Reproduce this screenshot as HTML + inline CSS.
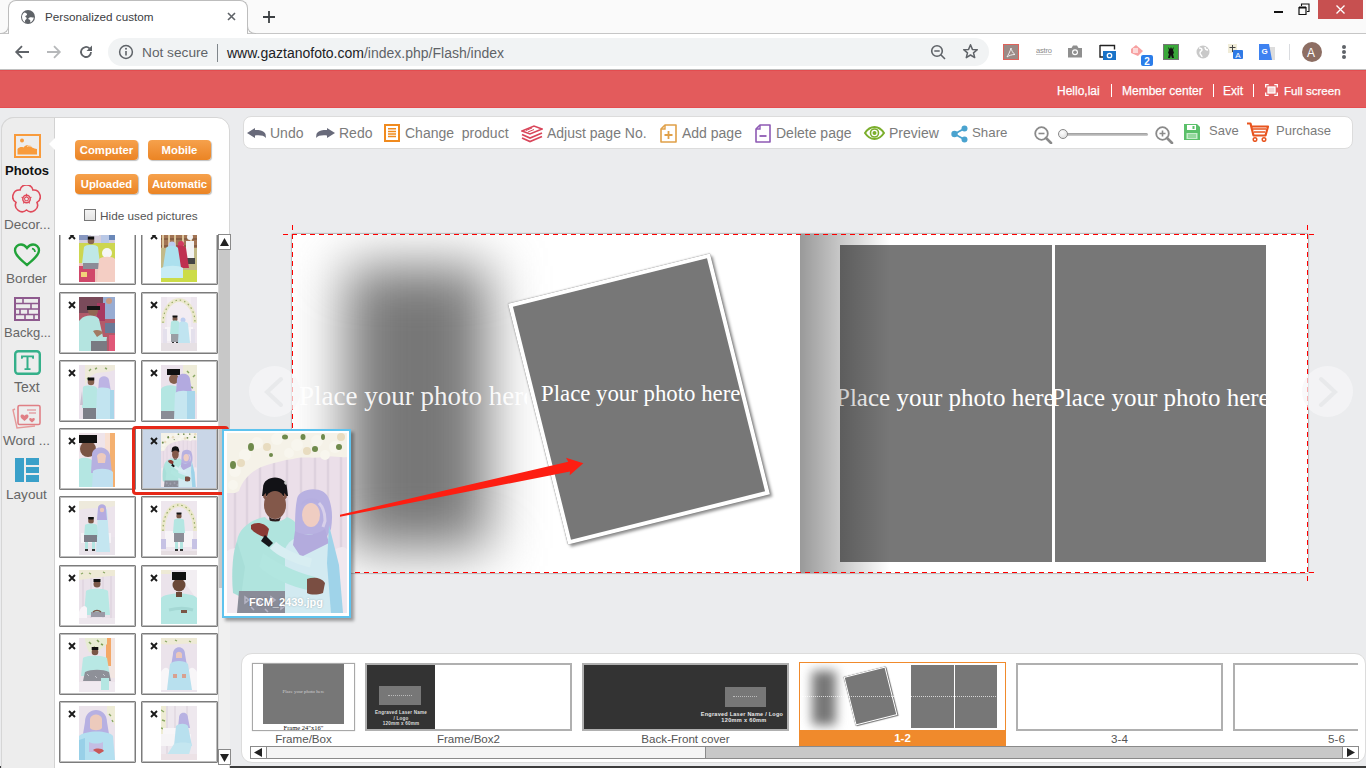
<!DOCTYPE html>
<html><head><meta charset="utf-8">
<style>
*{margin:0;padding:0;box-sizing:border-box}
html,body{width:1366px;height:768px;overflow:hidden;background:#ebecee;font-family:"Liberation Sans",sans-serif;position:relative}
.a{position:absolute}
.t{position:absolute;white-space:nowrap;line-height:1}
.btn{position:absolute;width:63px;height:20px;border-radius:4px;background:linear-gradient(#f6a14c,#eb8424);color:#fff;font-weight:bold;font-size:11.3px;line-height:20px;text-align:center;box-shadow:1px 1px 1px rgba(0,0,0,.25);white-space:nowrap}
.cell{position:absolute;width:77px;height:62px;border:1px solid #7c7c7c;box-shadow:inset 0 0 0 1px #bdbdbd;border-radius:1px}
.cell .x{position:absolute;left:8px;top:8px}
.cell .ph{position:absolute;left:19.5px;top:4px}
.tb{position:absolute;top:126px;font-size:14px;color:#7b7b7b;white-space:nowrap;line-height:1}
.lb{position:absolute;top:733px;font-size:11.6px;color:#555;text-align:center;white-space:nowrap;line-height:1}
</style></head><body>
<svg width="0" height="0" style="position:absolute">
<defs>
<symbol id="p_sit" viewBox="0 0 36 54"><rect width="36" height="54" fill="#ddd6d6"/><path d="M0 0h36v16H0z" fill="#d4cedc"/><path d="M0 0h9v12H0z" fill="#8797c0"/><path d="M12 0h8v8h-8z" fill="#ececf4"/><path d="M22 0h8v15H22z" fill="#b9c8e6"/><path d="M30 0h6v12h-6z" fill="#6a88b8"/><rect y="15" width="36" height="20" fill="#cdd650"/><path d="M0 35h36v19H0z" fill="#eec4bd"/><path d="M0 38h16v16H0z" fill="#d0486a"/><path d="M2 44h6v5H2z" fill="#f2d27a"/><circle cx="12" cy="13" r="3.3" fill="#8a6652"/><path d="M8.8 11.5h6.4v-3H8.8z" fill="#111"/><path d="M5 19c2-3 12-3 14 0l2 17H3z" fill="#bfe8e6"/><path d="M4 35h17v6H4z" fill="#8c8c98"/><circle cx="28" cy="25" r="5" fill="#f6f6f6"/><path d="M20 31c3-3 14-3 16 0v23H18z" fill="#f4cec4"/></symbol>
<symbol id="p_shelf" viewBox="0 0 36 54"><rect width="36" height="54" fill="#a27454"/><path d="M0 4h36M0 11h36M0 18h36" stroke="#6a4a34" stroke-width="1.1"/><path d="M2 0v20M8 0v20M14 0v20M22 0v20M30 0v20" stroke="#dcc49a" stroke-width="2"/><rect y="20" width="36" height="34" fill="#c2ba88"/><rect y="42" width="36" height="12" fill="#ccdc48"/><circle cx="29" cy="9" r="3" fill="#f4f4f4"/><path d="M25 13h8v20h-8z" fill="#f2f2f2"/><path d="M25 30h9v6h-9z" fill="#444"/><circle cx="20" cy="16" r="3" fill="#d03a60"/><path d="M15 19c2-2 8-2 10 1l3 20H15z" fill="#bf3050"/><circle cx="11" cy="17" r="3.5" fill="#bccbf2"/><path d="M5 20c2-3 10-3 12 0l4 26H1z" fill="#ace0ee"/><path d="M0 40c6-3 18-3 22 0v10H0z" fill="#c8ecf4"/></symbol>
<symbol id="p_pray" viewBox="0 0 36 54"><rect width="36" height="54" fill="#b25a6a"/><path d="M0 0h36v16H0z" fill="#7a4a5a"/><path d="M24 0h12v22H24z" fill="#98acd2"/><circle cx="30" cy="4" r="3" fill="#c89a80"/><path d="M18 6h8v18h-8z" fill="#a83860"/><path d="M26 26h10v10H26z" fill="#6a7a98"/><path d="M30 38h6v16h-6z" fill="#e05878"/><circle cx="14" cy="14" r="5" fill="#926652"/><path d="M8 9h13v4H8z" fill="#151515"/><path d="M2 22c3-4 14-5 18 0l4 18h4l-2 14H0V24z" fill="#b4e4e0"/><path d="M14 34c3-2 9-1 10 2l-6 4z" fill="#a27a62"/><path d="M12 44h16v10H12z" fill="#7a7a82"/></symbol>
<symbol id="p_arch" viewBox="0 0 36 54"><rect width="36" height="54" fill="#ede6ee"/><path d="M6 0h24v54H6z" fill="#f2ecf2"/><path d="M2 26C2 10 12 3 18 3s16 7 16 23" fill="none" stroke="#ebe8cc" stroke-width="4"/><path d="M2 26C2 10 12 3 18 3s16 7 16 23" fill="none" stroke="#98ac68" stroke-width="1.2" stroke-dasharray="1.5 3"/><path d="M4 30h28v14H4z" fill="#f7f4f7"/><circle cx="14" cy="22" r="2.5" fill="#7a5a4a"/><path d="M11.5 20.5h5v-2h-5z" fill="#111"/><path d="M10 25c1-2 7-2 8 0l1 12h-10z" fill="#b4e6e2"/><path d="M10 37h8v8h-8z" fill="#9a9ea4"/><path d="M11 45h2v2h-2zM15 45h2v2h-2z" fill="#333"/><circle cx="22" cy="23" r="2.5" fill="#bccdf0"/><path d="M18 26c1-2 8-2 9 1l2 19H17z" fill="#c0e4f0"/><path d="M2 32h4v14H2zM30 32h4v14h-4z" fill="#e4e0ec"/><rect y="46" width="36" height="8" fill="#e6e0e4"/></symbol>
<symbol id="p_stand" viewBox="0 0 36 54"><rect width="36" height="54" fill="#ebe2ec"/><path d="M6 0h30v5c-6 2-12 2-18 3C12 10 8 14 6 22z" fill="#eeeada"/><path d="M10 6l2-2M16 4l2-1M26 3l2 1M8 14l2-1" stroke="#8aa864" stroke-width="1.4"/><circle cx="12" cy="17" r="3.3" fill="#85604e"/><path d="M8.7 15.5h6.6v-3H8.7z" fill="#111"/><path d="M4 22c2-2 12-2 14 1l1 20H3z" fill="#b6e6e2"/><path d="M4 43h13v11H4z" fill="#7c7e88"/><path d="M3 26l-2 14h3z" fill="#c8c0d0"/><circle cx="25" cy="16" r="3.3" fill="#ecc8ba"/><path d="M20 15c1-5 9-5 10 0l2 12H19z" fill="#bdb4e4"/><path d="M18 24c2-2 12-2 14 1l2 29H17z" fill="#c2e4f0"/><path d="M31 25h4v29h-4z" fill="#a8d6ea"/></symbol>
<symbol id="p_close" viewBox="0 0 36 54"><rect width="36" height="54" fill="#ebe2eb"/><path d="M22 0h14v30c-4-6-6-14-14-20z" fill="#eeecd8"/><path d="M26 6l2 2M32 12l2-2M30 22l2 1" stroke="#8aa864" stroke-width="1.5"/><circle cx="13" cy="14" r="5" fill="#85604e"/><path d="M6 10h13V4H6z" fill="#111"/><path d="M0 24c3-5 15-5 20 0l2 30H0z" fill="#b4e6e2"/><path d="M0 46h16v8H0z" fill="#8a8c96"/><circle cx="22" cy="17" r="4" fill="#ecc4b6"/><path d="M16 14c1-7 12-7 13 0l2 14H15z" fill="#b3aae0"/><path d="M14 28c4-3 14-3 18 1l2 25H13z" fill="#c6e6f0"/><path d="M26 26h8v28h-8z" fill="#a8d6ea"/></symbol>
<symbol id="p_face" viewBox="0 0 36 54"><rect width="36" height="54" fill="#efe4ea"/><path d="M30 0h6v54h-6z" fill="#f4b070"/><path d="M26 0h5v30h-5z" fill="#f8e0d2"/><circle cx="9" cy="16" r="8" fill="#7a5444"/><path d="M0 2h18v8H0z" fill="#121212"/><path d="M0 26c4-2 10-2 14 2l4 26H0z" fill="#b4e6e2"/><circle cx="22" cy="25" r="5.5" fill="#eccaba"/><path d="M13 22c0-10 16-10 18 0l2 18H12z" fill="#b6b0e0"/><path d="M18 23c1-4 8-4 9 0l-1 7h-7z" fill="#eecbbd"/><path d="M14 38c4-3 16-3 20 1v15H13z" fill="#c0e0f0"/></symbol>
<symbol id="p_coupleB" viewBox="0 0 36 54"><rect width="36" height="54" fill="#ece4ec"/><path d="M0 0h36v5C24 8 12 6 0 9z" fill="#eeeadc"/><path d="M0 36h36v18H0z" fill="#e9e3ea"/><path d="M2 32h30v10H2z" fill="#f6f2f6"/><path d="M19 9c2-3 8-3 9 0l3 42H17z" fill="#c4e6f0"/><path d="M19 7c0-5 8-5 8 0l1 12h-10z" fill="#b4abe0"/><circle cx="23" cy="9" r="2.2" fill="#ecc8ba"/><circle cx="12" cy="20" r="2.8" fill="#7a5646"/><path d="M9.2 18.5h5.6v-2.5H9.2z" fill="#111"/><path d="M6 24c2-2 10-2 12 0l1 12H5z" fill="#b4e6e2"/><path d="M5 34h13v7H5z" fill="#7c7e88"/><path d="M6 41h3v7H6zM13 41h3v7h-3z" fill="#b4e6e2"/><path d="M6 48h3v2H6zM13 48h3v2h-3z" fill="#333"/></symbol>
<symbol id="p_manarch" viewBox="0 0 36 54"><rect width="36" height="54" fill="#eee7ee"/><path d="M2 30C2 10 12 4 18 4s16 6 16 26" fill="none" stroke="#ebe8cc" stroke-width="4"/><path d="M2 30C2 10 12 4 18 4s16 6 16 26" fill="none" stroke="#98ac68" stroke-width="1.2" stroke-dasharray="1.5 3"/><path d="M4 30h28v16H4z" fill="#f7f4f7"/><circle cx="18" cy="15" r="2.6" fill="#7a5848"/><path d="M15.5 13.5h5v-2h-5z" fill="#111"/><path d="M13 19c1-2 9-2 10 0l1 13H12z" fill="#b4e6e2"/><path d="M13 32h10v9H13z" fill="#8c8e98"/><path d="M14 41h3v7h-3zM19 41h3v7h-3z" fill="#b4e6e2"/><path d="M14 48h3v2h-3zM19 48h3v2h-3z" fill="#333"/><path d="M0 38h5v10H0zM31 38h5v10h-5z" fill="#c6c2e4"/><rect y="50" width="36" height="4" fill="#e6dee2"/></symbol>
<symbol id="p_mansit" viewBox="0 0 36 54"><rect width="36" height="54" fill="#eae2ea"/><path d="M4 0v54M12 0v54M24 0v54M32 0v54" stroke="#e2d8e2" stroke-width="2"/><path d="M0 0h36v6c-10 0-20 2-36 4z" fill="#eeead6"/><path d="M2 4l2-1M10 3l2 1M24 2l2 1" stroke="#8aa864" stroke-width="1.3"/><circle cx="18" cy="14" r="3.5" fill="#7a5646"/><path d="M14.5 12h7V9h-7z" fill="#111"/><path d="M7 21c3-3 19-3 22 0l2 24H5z" fill="#b8e8e4"/><path d="M0 42c2-6 6-8 8-4v16H0z" fill="#f8f4f8"/><path d="M12 42h14v5H12z" fill="#9a9aa6"/><path d="M14 42c2-2 6-2 8 0" stroke="#7a5646" stroke-width="1.5" fill="none"/><path d="M0 48h36v6H0z" fill="#eee8ee"/></symbol>
<symbol id="p_portrait" viewBox="0 0 36 54"><rect width="36" height="54" fill="#ebe3eb"/><path d="M24 0h12v30c-4-6-8-12-12-16z" fill="#f2eef2"/><path d="M0 0h10v4H0z" fill="#eeead6"/><circle cx="18" cy="15" r="6.5" fill="#6a4838"/><path d="M11 10h14V2H11z" fill="#101010"/><path d="M0 28c4-6 32-6 36 0v26H0z" fill="#b4e6e2"/><path d="M15 22h6v5h-6z" fill="#6a4838"/><path d="M8 40c8-2 18-2 24 0" stroke="#a4d8d4" stroke-width="3" fill="none"/><path d="M20 40h6v3h-6z" fill="#7a5646"/></symbol>
<symbol id="p_mansit2" viewBox="0 0 36 54"><rect width="36" height="54" fill="#ece3ea"/><path d="M28 0h8v40h-8z" fill="#f2e6e2"/><path d="M27 0h5v28h-5z" fill="#f4a868"/><path d="M6 0h22v6c-6 6-12 10-18 8C8 10 6 4 6 0z" fill="#e8ecd4"/><path d="M10 4l2 2M18 2l2 2M14 10l2-1M22 6l2 1" stroke="#7e9e58" stroke-width="1.6"/><circle cx="16" cy="14" r="3.3" fill="#7a5646"/><path d="M12.7 12h6.6V9h-6.6z" fill="#111"/><path d="M4 20c3-3 20-3 24 0l3 18H2z" fill="#b8e8e4"/><path d="M6 34c6-3 18-3 24 0l2 9H4z" fill="#8e9098"/><path d="M8 36l2 2M16 38l2 2M24 36l2 2" stroke="#c4c4cc" stroke-width="1"/><path d="M0 44h36v10H0z" fill="#f0eaf0"/><path d="M22 40h8v12h-8z" fill="#b4e6e2"/></symbol>
<symbol id="p_womansit" viewBox="0 0 36 54"><rect width="36" height="54" fill="#ebe3eb"/><path d="M0 0h36v6c-12-2-24 2-36 0z" fill="#eeead6"/><path d="M4 3l2 1M14 2l2 1M28 3l2 1" stroke="#8aa864" stroke-width="1.3"/><path d="M0 32h36v22H0z" fill="#ece6ee"/><path d="M0 34c2-4 6-6 8-2v20H0zM36 34c-2-4-6-6-8-2v20h8z" fill="#f8f6f8"/><circle cx="18" cy="17" r="3.5" fill="#ecc8ba"/><path d="M12 16c0-9 12-9 12 0l2 12H10z" fill="#b4b0e2"/><path d="M15 16c1-3 5-3 6 0v4h-6z" fill="#ecc8ba"/><path d="M9 26c3-4 15-4 18 0l4 26H6z" fill="#b8e0ee"/><path d="M12 36h4v4h-4zM21 36h4v4h-4z" fill="#d8a090"/></symbol>
<symbol id="p_womanclose" viewBox="0 0 36 54"><rect width="36" height="54" fill="#ebe3eb"/><path d="M28 0h8v20c-3-6-5-10-8-12z" fill="#eeecd6"/><path d="M30 8l2 2M33 14l1 2" stroke="#8aa864" stroke-width="1.4"/><path d="M6 16c0-16 22-16 22 0l3 18H3z" fill="#b6b0e2"/><path d="M11 13c1-6 11-6 12 0v9c-2 3-10 3-12 0z" fill="#eccabc"/><path d="M0 30c6-6 30-6 34 0l2 24H0z" fill="#b4e0f0"/><path d="M10 36c4 2 10 2 14 0v10H10z" fill="#c4bee4"/><path d="M0 34l6-2v22H0z" fill="#98d0e8"/><path d="M14 44c3-2 9-2 11 1l-5 3z" fill="#c85858"/></symbol>
<symbol id="p_womansofa" viewBox="0 0 36 54"><rect width="36" height="54" fill="#eee8ee"/><path d="M6 0v54M14 0v54M26 0v54" stroke="#e4dce4" stroke-width="2"/><path d="M0 0h5v30H0z" fill="#eeecd4"/><path d="M0 4l3 2M1 14l3 1M0 22l3 1" stroke="#8aa864" stroke-width="1.4"/><path d="M2 22h24v6H2z" fill="#f8f6f8"/><path d="M0 28h30v12H0z" fill="#f6f4f6"/><circle cx="22" cy="12" r="3" fill="#eac6b8"/><path d="M18 12c0-7 9-7 9 0l2 10H17z" fill="#b8b2e2"/><path d="M15 20c3-3 10-3 12 0l4 20H13z" fill="#b8e0ee"/><path d="M13 38c4-2 14-2 18 0l-4 14H4z" fill="#c4e6f0"/><path d="M0 48h36v6H0z" fill="#ece2e6"/></symbol>
<symbol id="p_big" viewBox="0 0 120 180"><rect width="120" height="180" fill="#ebdfe9"/><path d="M8 0v180M20 0v180M33 0v180M47 0v180M60 0v180M74 0v180M88 0v180M101 0v180M114 0v180" stroke="#dccfdc" stroke-width="2.5" opacity=".8"/><path d="M0 0h120v24c-8 1-16-2-24 0-10 2-20-1-30 2-10 1-18 4-26 6-14 4-24 14-28 26L8 60H0z" fill="#f5f2e8"/><g fill="#f8f6ee"><circle cx="30" cy="10" r="6"/><circle cx="50" cy="6" r="6"/><circle cx="70" cy="12" r="6"/><circle cx="90" cy="8" r="6"/><circle cx="108" cy="14" r="6"/><circle cx="18" cy="22" r="6"/><circle cx="8" cy="38" r="6"/><circle cx="6" cy="52" r="5"/><circle cx="62" cy="20" r="5"/><circle cx="98" cy="22" r="5"/></g><g fill="#e8dcc0"><circle cx="40" cy="14" r="4"/><circle cx="80" cy="18" r="4"/><circle cx="14" cy="30" r="4"/><circle cx="114" cy="4" r="4"/></g><g fill="#6f8a4c"><ellipse cx="24" cy="14" rx="3" ry="4"/><ellipse cx="58" cy="4" rx="3" ry="2.5"/><ellipse cx="76" cy="4" rx="2.5" ry="3"/><ellipse cx="88" cy="16" rx="3" ry="3"/><ellipse cx="112" cy="14" rx="3" ry="3"/><ellipse cx="6" cy="32" rx="3" ry="4"/><ellipse cx="96" cy="4" rx="2" ry="3"/><ellipse cx="44" cy="22" rx="2" ry="2"/></g><path d="M0 118c6-4 12-4 14 2v60H0z" fill="#f1e9f0"/><path d="M104 120c6-6 12-8 16-4v64h-16z" fill="#f0e8ef"/><path d="M36 55c0-14 24-14 24 0l1 8H35z" fill="#121216"/><path d="M57 50l1.5-3 1.5 3-1.5 2z" fill="#ccc"/><ellipse cx="48" cy="72" rx="11" ry="14" fill="#83584a"/><path d="M36 64c1-3 3-4 3-4v8zM60 64c-1-3-3-4-3-4v8z" fill="#83584a"/><path d="M42 84c4 3 9 3 12 0l-2 5c-3 1-6 1-9 0z" fill="#2a1c1c"/><path d="M10 108c2-14 16-22 28-24 4 6 16 6 22 0 6 2 12 8 16 16l4 56-20 6-22 4H14z" fill="#b0e4de"/><path d="M10 108c-4 10-6 30-4 52l8 4 4-30z" fill="#a8ded8"/><path d="M62 158h-50l-2 22h54z" fill="#8a8c98"/><path d="M18 164l4 3-4 3zM30 166l4 3-4 3zM44 164l4 3-4 3zM54 170l4 3-4 3zM24 174l3 3M38 176l3 3" stroke="#b4b4c4" stroke-width="1.6" fill="none"/><path d="M70 66c2-12 28-14 32 0 3 8 4 18 2 30l-8 14-14 8-14-18c0-12 0-24 2-34z" fill="#b8b1e1"/><ellipse cx="84" cy="82" rx="9" ry="12" fill="#efcdc2"/><path d="M74 72c2-8 18-10 20 0-4-3-14-4-20 0z" fill="#b6afe0"/><path d="M92 70c4 4 6 10 6 18l-2 6" stroke="#d8d0ea" stroke-width="3" fill="none"/><path d="M58 116c6-16 30-18 44-12l6 76H58z" fill="#d2eaf1"/><path d="M68 98c8 5 20 5 30-2l4 14-28 14-8-12z" fill="#b3abdd"/><path d="M102 92l10 40 4 48h-12l-4-50z" fill="#9fd3e9"/><path d="M36 120c14 10 30 18 52 24l-2 14c-24-4-42-14-54-24z" fill="#b2e6e0"/><path d="M46 112c6 6 20 14 38 18" stroke="#d8eef2" stroke-width="9" fill="none"/><path d="M80 146c6-2 14-2 18 4l-2 10c-6 2-12 2-16 0z" fill="#7a4e42"/><path d="M24 92c6-4 14-2 18 4l-2 8c-6 0-12-4-16-8z" fill="#8a3a34"/><path d="M38 102l8 8-4 4-8-6z" fill="#16161a"/></symbol>
</defs></svg>


<!-- ===== Chrome tab strip ===== -->
<div class="a" style="left:0;top:0;width:1366px;height:34px;background:#fafafa;border-bottom:1px solid #c6c6c6"></div>
<div class="a" style="left:8px;top:0;width:240px;height:35px;background:#fff;border:1px solid #bdbdbd;border-bottom:none;border-radius:8px 8px 0 0"></div>
<!-- curvy feet -->
<div class="a" style="left:0;top:24px;width:9px;height:10px;border-right:1px solid #bdbdbd;border-bottom:1px solid #bdbdbd;border-radius:0 0 8px 0;background:#fafafa"></div>
<div class="a" style="left:247px;top:24px;width:9px;height:10px;border-left:1px solid #bdbdbd;border-bottom:1px solid #bdbdbd;border-radius:0 0 0 8px;background:#fafafa"></div>
<div class="a" style="left:9px;top:33px;width:238px;height:2px;background:#fff"></div>
<!-- globe -->
<svg class="a" style="left:21px;top:10px" width="14" height="14" viewBox="0 0 14 14"><circle cx="7" cy="7" r="7" fill="#5f6368"/><path d="M3.5 2.6c1.2 .2 2.6 .9 2.6 2 0 1-1.4 .9-1.8 1.7-.3 .7 1.3 1 1.4 1.9.1.9-1 1.2-1.6 2.3-.4.7-.2 1.6.4 2.2C2.4 11.9 1 9.6 1 7c0-1.8.9-3.4 2.5-4.4zM9.3 7.3c.9-.3 2.3 0 3.5.3-.2 2.2-1.6 4.1-3.6 5-.2-.8.4-1.5 0-2.3-.4-.9-1.8-.8-1.9-1.5 0-.6 1-1.2 2-1.5z" fill="#fff"/></svg>
<div class="t" style="left:45px;top:11px;font-size:11.7px;color:#3c4043">Personalized custom</div>
<svg class="a" style="left:227px;top:12px" width="9" height="9" viewBox="0 0 9 9"><path d="M1 1L8 8M8 1L1 8" stroke="#5f6368" stroke-width="1.6"/></svg>
<svg class="a" style="left:262px;top:10px" width="14" height="14" viewBox="0 0 14 14"><path d="M7 1V13M1 7H13" stroke="#3c4043" stroke-width="1.8"/></svg>
<!-- window controls -->
<div class="a" style="left:1274px;top:11px;width:9px;height:2px;background:#111"></div>
<svg class="a" style="left:1298px;top:3px" width="12" height="12" viewBox="0 0 12 12"><path d="M1 4.5h7v7h-7z" fill="none" stroke="#111" stroke-width="1.2"/><path d="M1 4.5h7" stroke="#111" stroke-width="2"/><path d="M3.5 3V1h7.5v7.5H9" fill="none" stroke="#111" stroke-width="1.1"/></svg>
<div class="a" style="left:1318px;top:0;width:45px;height:19px;background:#c75050"></div>
<svg class="a" style="left:1336px;top:5px" width="9" height="9" viewBox="0 0 9 9"><path d="M.5 .5L8.5 8.5M8.5 .5L.5 8.5" stroke="#fff" stroke-width="1.3"/></svg>

<!-- ===== Chrome toolbar ===== -->
<div class="a" style="left:0;top:34px;width:1366px;height:36px;background:#fff"></div>
<svg class="a" style="left:14px;top:44px" width="16" height="16" viewBox="0 0 16 16"><path d="M15 8H2.5M8 2.2L2.2 8 8 13.8" fill="none" stroke="#5f6368" stroke-width="1.8"/></svg>
<svg class="a" style="left:46px;top:44px" width="16" height="16" viewBox="0 0 16 16"><path d="M1 8H13.5M8 2.2L13.8 8 8 13.8" fill="none" stroke="#b6b8ba" stroke-width="1.8"/></svg>
<svg class="a" style="left:78px;top:44px" width="16" height="16" viewBox="0 0 16 16"><path d="M13 8A5 5 0 1 1 11.5 4.4" fill="none" stroke="#5f6368" stroke-width="1.8"/><path d="M14 1.5V7H8.5z" fill="#5f6368"/></svg>
<div class="a" style="left:108px;top:38px;width:881px;height:28px;background:#f1f3f4;border-radius:14px"></div>
<svg class="a" style="left:118px;top:44px" width="16" height="16" viewBox="0 0 16 16"><circle cx="8" cy="8" r="6.4" fill="none" stroke="#5f6368" stroke-width="1.5"/><path d="M8 7v4.5" stroke="#5f6368" stroke-width="1.6"/><circle cx="8" cy="4.8" r="1" fill="#5f6368"/></svg>
<div class="t" style="left:142px;top:45.5px;font-size:13.7px;color:#5f6368">Not secure</div>
<div class="a" style="left:217px;top:44px;width:1px;height:18px;background:#80868b"></div>
<div class="t" style="left:227px;top:45.5px;font-size:14px;color:#202124">www.gaztanofoto.com<span style="color:#5f6368">/index.php/Flash/index</span></div>
<svg class="a" style="left:930px;top:44px" width="17" height="17" viewBox="0 0 17 17"><circle cx="7" cy="7" r="5.3" fill="none" stroke="#5f6368" stroke-width="1.6"/><path d="M4.3 7H9.7M10.8 10.8L15 15" stroke="#5f6368" stroke-width="1.6"/></svg>
<svg class="a" style="left:962px;top:43px" width="17" height="17" viewBox="0 0 17 17"><path d="M8.5 1.8L10.4 6.4 15.3 6.7 11.5 9.8 12.7 14.6 8.5 12 4.3 14.6 5.5 9.8 1.7 6.7 6.6 6.4z" fill="none" stroke="#5f6368" stroke-width="1.5" stroke-linejoin="round"/></svg>
<!-- extension icons -->
<div class="a" style="left:1003px;top:44px;width:16px;height:16px;background:#9b8a86;border:1.5px solid #e0625a"></div>
<svg class="a" style="left:1004px;top:45px" width="14" height="14" viewBox="0 0 14 14"><path d="M3 12c1-2 3-5 4-9 .5 2 1.5 5 4 6.5-3 0-6 1-8 2.5z" fill="none" stroke="#eee" stroke-width="1"/></svg>
<div class="t" style="left:1036px;top:47px;font-size:7.5px;color:#8a8a8a;letter-spacing:-.2px;text-decoration:underline;text-decoration-color:#ccc">astro</div>
<svg class="a" style="left:1067px;top:44px" width="16" height="14" viewBox="0 0 16 14"><path d="M1 4h3.5l1.5-2.5h4L11.5 4H15v9.5H1z" fill="#8f8f8f"/><circle cx="8" cy="8.3" r="3" fill="#fff"/><circle cx="8" cy="8.3" r="1.8" fill="#8f8f8f"/></svg>
<svg class="a" style="left:1099px;top:44px" width="17" height="16" viewBox="0 0 17 16"><path d="M1 1.5h14.5v4" fill="none" stroke="#222" stroke-width="1.4"/><path d="M1 1v12h3" fill="none" stroke="#222" stroke-width="1.4"/><rect x="4" y="7" width="13" height="9" fill="#1a73c8"/><circle cx="10.5" cy="11.5" r="2.2" fill="none" stroke="#fff" stroke-width="1.3"/></svg>
<svg class="a" style="left:1130px;top:44px" width="24" height="22" viewBox="0 0 24 22"><path d="M1 5l5-4 7 6-5 5-7-3z" fill="#f7a1a1"/><path d="M3 4h5v5H3z" fill="#fff" opacity=".6"/><rect x="11" y="11" width="12" height="11" rx="2" fill="#2b7de9"/><text x="17" y="20.5" font-size="10" font-weight="bold" fill="#fff" text-anchor="middle" font-family="Liberation Sans">2</text></svg>
<div class="a" style="left:1163px;top:44px;width:16px;height:16px;background:#3aa83a;border:1px solid #777"></div>
<svg class="a" style="left:1164px;top:45px" width="14" height="14" viewBox="0 0 14 14"><path d="M7 2l1 2 2-2-1 3 1 3-1 1 1 4H8L7 10 6 13H4l1-4-1-1 1-3-1-3 2 2z" fill="#111"/></svg>
<svg class="a" style="left:1195px;top:44px" width="16" height="16" viewBox="0 0 16 16"><circle cx="8" cy="8" r="6.5" fill="#c9c9c9"/><path d="M4 4c2 0 3 1 3 2s-2 1-2 3 2 2 2 4M10 3c0 2 1 3 3 3" fill="none" stroke="#fff" stroke-width="1.4"/></svg>
<svg class="a" style="left:1227px;top:43px" width="17" height="17" viewBox="0 0 17 17"><rect x="1" y="1" width="9" height="9" fill="#f0ecd8"/><path d="M5.5 2v7M2.5 4.5h6" stroke="#444" stroke-width="1"/><rect x="6" y="7" width="10" height="9" rx="1" fill="#2f7ae5"/><text x="11" y="15" font-size="8" fill="#fff" text-anchor="middle" font-family="Liberation Sans">A</text></svg>
<svg class="a" style="left:1258px;top:43px" width="18" height="18" viewBox="0 0 18 18"><rect x="8" y="4" width="9" height="13" fill="#ddd"/><path d="M1 1h10l3 16H1z" fill="#3e82f1"/><text x="6.5" y="11" font-size="8" font-weight="bold" fill="#fff" text-anchor="middle" font-family="Liberation Sans">G</text></svg>
<div class="a" style="left:1289px;top:44px;width:1px;height:16px;background:#dadce0"></div>
<div class="a" style="left:1302px;top:42px;width:20px;height:20px;border-radius:50%;background:#8d6e63"></div>
<div class="t" style="left:1307px;top:47px;font-size:12px;color:#fff">A</div>
<div class="a" style="left:1342px;top:45px;width:4px;height:4px;border-radius:50%;background:#5f6368"></div>
<div class="a" style="left:1342px;top:50px;width:4px;height:4px;border-radius:50%;background:#5f6368"></div>
<div class="a" style="left:1342px;top:55px;width:4px;height:4px;border-radius:50%;background:#5f6368"></div>
<div class="a" style="left:0;top:69px;width:1366px;height:1px;background:#c0c0c0"></div>

<!-- ===== Red header ===== -->
<div class="a" style="left:0;top:70px;width:1366px;height:38px;background:#e35b5c;border-top:1px solid #e34c4f;border-bottom:1px solid #e54e51"></div>
<div class="t" style="left:1057px;top:85px;font-size:12px;color:#fff;-webkit-text-stroke:.25px #fff">Hello,lai</div>
<div class="a" style="left:1111px;top:84px;width:1px;height:13px;background:#fff"></div>
<div class="t" style="left:1122px;top:85px;font-size:12px;color:#fff;-webkit-text-stroke:.25px #fff">Member center</div>
<div class="a" style="left:1213px;top:84px;width:1px;height:13px;background:#fff"></div>
<div class="t" style="left:1223px;top:85px;font-size:12px;color:#fff;-webkit-text-stroke:.25px #fff">Exit</div>
<div class="a" style="left:1253px;top:84px;width:1px;height:13px;background:#fff"></div>
<svg class="a" style="left:1265px;top:84px" width="13" height="12" viewBox="0 0 13 12"><path d="M.7 3.5V.7h3M9.3 .7h3v2.8M12.3 8.5v2.8h-3M3.7 11.3h-3V8.5" fill="none" stroke="#fff" stroke-width="1.3"/><rect x="3" y="3" width="7" height="6" fill="#f4d0d0" stroke="#fff" stroke-width="1.3"/></svg>
<div class="t" style="left:1284px;top:85px;font-size:11.6px;color:#fff;-webkit-text-stroke:.25px #fff">Full screen</div>



<!-- ===== Toolbar ===== -->
<div class="a" style="left:243px;top:116px;width:1110px;height:33px;background:#fff;border:1px solid #dcdcdc;border-radius:8px"></div>
<svg class="a" style="left:247px;top:128px" width="19" height="10" viewBox="0 0 19 10"><path d="M0 5L8 0V2C12 1.5 17 2.5 18.5 6L19 10C17 7.5 13 7 8 7.5V10z" fill="#686a7a"/></svg>
<div class="tb" style="left:270px">Undo</div>
<svg class="a" style="left:316px;top:128px" width="19" height="10" viewBox="0 0 19 10"><path d="M19 5L11 0V2C7 1.5 2 2.5 .5 6L0 10C2 7.5 6 7 11 7.5V10z" fill="#686a7a"/></svg>
<div class="tb" style="left:339px">Redo</div>
<svg class="a" style="left:384px;top:124px" width="16" height="18" viewBox="0 0 16 18"><rect x="1" y="1" width="14" height="16" fill="none" stroke="#f08a1e" stroke-width="2"/><path d="M4 4.8h8M4 7.4h8M4 10h8M4 12.6h8" stroke="#f08a1e" stroke-width="1.5"/></svg>
<div class="tb" style="left:405px">Change&nbsp; product</div>
<svg class="a" style="left:521px;top:124px" width="22" height="19" viewBox="0 0 22 19"><path d="M1 7l12-5 8 3-12 5z" fill="none" stroke="#d9465a" stroke-width="1.5"/><path d="M1 10.5l8 3.5 12-5M1 14l8 3.5 12-5" fill="none" stroke="#d9465a" stroke-width="1.8"/><path d="M5 6.5l6-2.5M7 8l6-2.5" stroke="#d9465a" stroke-width="1"/></svg>
<div class="tb" style="left:547px">Adjust page No.</div>
<svg class="a" style="left:660px;top:124px" width="17" height="19" viewBox="0 0 17 19"><path d="M5 1h11v17H1V5z" fill="none" stroke="#e0a048" stroke-width="1.6" stroke-linejoin="round"/><path d="M1 5h4V1" fill="none" stroke="#e0a048" stroke-width="1.4"/><path d="M8.5 7v8M4.5 11h8" stroke="#e0a048" stroke-width="1.8"/></svg>
<div class="tb" style="left:682px">Add page</div>
<svg class="a" style="left:755px;top:124px" width="16" height="19" viewBox="0 0 16 19"><path d="M5 1h10v17H1V5z" fill="none" stroke="#8e5ab4" stroke-width="1.6" stroke-linejoin="round"/><path d="M1 5h4V1" fill="none" stroke="#8e5ab4" stroke-width="1.4"/><path d="M4.5 12h7" stroke="#8e5ab4" stroke-width="1.8"/></svg>
<div class="tb" style="left:776px">Delete page</div>
<svg class="a" style="left:864px;top:126px" width="21" height="14" viewBox="0 0 21 14"><path d="M1 7C4 2.5 7 1 10.5 1S17 2.5 20 7c-3 4.5-6 6-9.5 6S4 11.5 1 7z" fill="none" stroke="#7bae2c" stroke-width="2"/><circle cx="10.5" cy="7" r="4" fill="none" stroke="#7bae2c" stroke-width="1.6"/><circle cx="10.5" cy="7" r="2" fill="#7bae2c"/></svg>
<div class="tb" style="left:889px">Preview</div>
<svg class="a" style="left:951px;top:125px" width="17" height="18" viewBox="0 0 17 18"><circle cx="13.5" cy="3.5" r="3" fill="#4aa3cf"/><circle cx="3.5" cy="9" r="3.2" fill="#4aa3cf"/><circle cx="13.5" cy="14.5" r="3" fill="#4aa3cf"/><path d="M13.5 3.5L3.5 9l10 5.5" fill="none" stroke="#4aa3cf" stroke-width="1.8"/></svg>
<div class="tb" style="left:972px;font-size:13.3px">Share</div>
<svg class="a" style="left:1034px;top:126px" width="19" height="18" viewBox="0 0 19 18"><circle cx="7.5" cy="7.5" r="6.3" fill="none" stroke="#8a8a8a" stroke-width="1.8"/><path d="M4.5 7.5h6" stroke="#8a8a8a" stroke-width="1.6"/><path d="M12 12l5 5" stroke="#8a8a8a" stroke-width="2.6" stroke-linecap="round"/></svg>
<div class="a" style="left:1060px;top:133px;width:88px;height:3px;background:linear-gradient(#9a9a9a,#d0d0d0);border-radius:2px"></div>
<div class="a" style="left:1058px;top:129px;width:10px;height:10px;border-radius:50%;background:radial-gradient(circle at 40% 35%,#fff,#d8d8d8);border:1px solid #888"></div>
<svg class="a" style="left:1155px;top:126px" width="19" height="18" viewBox="0 0 19 18"><circle cx="7.5" cy="7.5" r="6.3" fill="none" stroke="#8a8a8a" stroke-width="1.8"/><path d="M4.5 7.5h6M7.5 4.5v6" stroke="#8a8a8a" stroke-width="1.6"/><path d="M12 12l5 5" stroke="#8a8a8a" stroke-width="2.6" stroke-linecap="round"/></svg>
<svg class="a" style="left:1183px;top:123px" width="18" height="18" viewBox="0 0 18 18"><path d="M1 1h13l3 3v13H1z" fill="#5bc06a"/><rect x="4" y="2" width="9" height="5" fill="#fff"/><rect x="9.5" y="3" width="2" height="3" fill="#5bc06a"/><rect x="3.5" y="10" width="11" height="6" fill="#c6eccb"/><path d="M5 12h8M5 14h8" stroke="#5bc06a" stroke-width=".9"/></svg>
<div class="tb" style="left:1209px;top:124px;font-size:13px">Save</div>
<svg class="a" style="left:1247px;top:122px" width="22" height="20" viewBox="0 0 22 20"><path d="M0 1.5h3.5l3 12h12l2.5-9H5" fill="none" stroke="#e8541e" stroke-width="2.2" stroke-linejoin="round"/><path d="M6 7h13M7 10h11" stroke="#e8541e" stroke-width="1.6"/><circle cx="8" cy="17.5" r="1.8" fill="none" stroke="#e8541e" stroke-width="1.5"/><circle cx="17" cy="17.5" r="1.8" fill="none" stroke="#e8541e" stroke-width="1.5"/></svg>
<div class="tb" style="left:1276px;top:124px;font-size:13px">Purchase</div>

<!-- ===== Page ===== -->
<div class="a" style="left:292px;top:234px;width:1016px;height:339px;background:#fff;box-shadow:0 0 1.5px rgba(0,0,0,.75);overflow:hidden">
  <!-- blurred placeholder -->
  <div class="a" style="left:54px;top:32px;width:142px;height:282px;background:#777;filter:blur(27px)"></div>
  <div class="a" style="left:0;top:140px;width:235px;height:50px;overflow:hidden"><div class="t" style="left:7px;top:9px;font-family:'Liberation Serif',serif;font-size:27px;color:rgba(255,255,255,.93)">Place your photo here</div></div>
  <!-- rotated placeholder -->
  <div class="a" style="left:243px;top:41px;width:208px;height:248px;background:#777;border:4px solid #fff;transform:rotate(-14deg);box-shadow:0 0 2px rgba(0,0,0,.35),2px 3px 3px rgba(0,0,0,.4)"></div>
  <div class="t" style="left:249px;top:149px;font-family:'Liberation Serif',serif;font-size:22.8px;color:#fff">Place your photo here</div>
  <!-- right page placeholders -->
  <div class="a" style="left:548px;top:11px;width:212px;height:317px;background:#777;overflow:hidden"><div class="t" style="left:-4px;top:140px;font-family:'Liberation Serif',serif;font-size:25px;color:#fff">Place your photo here</div></div>
  <div class="a" style="left:763px;top:11px;width:211px;height:317px;background:#777;overflow:hidden"><div class="t" style="left:-4px;top:140px;font-family:'Liberation Serif',serif;font-size:25px;color:#fff">Place your photo here</div></div>
  <!-- spine shadow -->
  <div class="a" style="left:508px;top:0;width:90px;height:339px;background:linear-gradient(90deg,rgba(0,0,0,.4),rgba(0,0,0,.22) 44%,rgba(0,0,0,0))"></div>
  <div class="a" style="left:0;top:0;width:508px;height:339px;background:transparent"></div>
</div>
<!-- dashed border -->
<div class="a" style="left:292px;top:234px;width:1016px;height:1px;background:repeating-linear-gradient(90deg,#f00 0 5px,transparent 5px 9px)"></div>
<div class="a" style="left:292px;top:572px;width:1016px;height:1px;background:repeating-linear-gradient(90deg,#f00 0 5px,transparent 5px 9px)"></div>
<div class="a" style="left:292px;top:234px;width:1px;height:339px;background:repeating-linear-gradient(180deg,#f00 0 5px,transparent 5px 9px)"></div>
<div class="a" style="left:1307px;top:234px;width:1px;height:339px;background:repeating-linear-gradient(180deg,#f00 0 5px,transparent 5px 9px)"></div>
<!-- crop marks -->
<div class="a" style="left:292px;top:225px;width:1px;height:5px;background:#f00"></div>
<div class="a" style="left:283px;top:234px;width:5px;height:1px;background:#f00"></div>
<div class="a" style="left:1307px;top:225px;width:1px;height:5px;background:#f00"></div>
<div class="a" style="left:1309px;top:234px;width:5px;height:1px;background:#f00"></div>
<div class="a" style="left:292px;top:576px;width:1px;height:5px;background:#f00"></div>
<div class="a" style="left:283px;top:572px;width:5px;height:1px;background:#f00"></div>
<div class="a" style="left:1307px;top:576px;width:1px;height:5px;background:#f00"></div>
<div class="a" style="left:1309px;top:572px;width:5px;height:1px;background:#f00"></div>
<!-- nav circles -->
<div class="a" style="left:249px;top:366px;width:51px;height:51px;border-radius:50%;background:rgba(247,247,248,.7)"></div>
<svg class="a" style="left:262px;top:376px" width="24" height="32" viewBox="0 0 24 32"><path d="M19 3L5 16l14 13" fill="none" stroke="rgba(222,223,225,.5)" stroke-width="4" stroke-linecap="round"/></svg>
<div class="a" style="left:1302px;top:366px;width:51px;height:51px;border-radius:50%;background:rgba(247,247,248,.7)"></div>
<svg class="a" style="left:1316px;top:376px" width="24" height="32" viewBox="0 0 24 32"><path d="M5 3l14 13L5 29" fill="none" stroke="rgba(222,223,225,.5)" stroke-width="4" stroke-linecap="round"/></svg>

<!-- ===== Bottom strip ===== -->
<div class="a" style="left:241px;top:653px;width:1125px;height:110px;background:#fff;border:1px solid #dcdcdc;border-radius:11px"></div>
<!-- thumb 1 -->
<div class="a" style="left:252px;top:663px;width:103px;height:68px;background:#fff;border:1px solid #a8a8a8;box-shadow:0 0 1px #bbb"></div>
<div class="a" style="left:263px;top:664px;width:81px;height:60px;background:#777"></div>
<div class="t" style="left:263px;top:690px;width:81px;text-align:center;font-family:'Liberation Serif',serif;font-size:4.8px;color:#d0d0d0">Place your photo here</div>
<div class="t" style="left:263px;top:724.5px;width:81px;text-align:center;font-family:'Liberation Serif',serif;font-size:6.5px;color:#111">Frame 24"x16"</div>
<div class="lb" style="left:252px;width:103px">Frame/Box</div>
<!-- thumb 2 -->
<div class="a" style="left:365px;top:663px;width:207px;height:68px;background:#fff;border:2px solid #b0b0b0"></div>
<div class="a" style="left:367px;top:665px;width:68px;height:64px;background:#333"></div>
<div class="a" style="left:379px;top:686px;width:42px;height:19px;background:#777"></div>
<div class="a" style="left:388px;top:695px;width:24px;height:1px;border-top:1px dotted #bbb"></div>
<div class="t" style="left:367px;top:711px;width:68px;text-align:center;font-size:4.6px;font-weight:bold;color:#ddd;letter-spacing:.2px">Engraved Laser Name</div>
<div class="t" style="left:367px;top:716.5px;width:68px;text-align:center;font-size:4.6px;font-weight:bold;color:#ddd;letter-spacing:.2px">/ Logo</div>
<div class="t" style="left:367px;top:722px;width:68px;text-align:center;font-size:4.6px;font-weight:bold;color:#ddd;letter-spacing:.2px">120mm x 60mm</div>
<div class="lb" style="left:365px;width:207px">Frame/Box2</div>
<!-- thumb 3 -->
<div class="a" style="left:582px;top:663px;width:207px;height:68px;background:#333;border:2px solid #b0b0b0"></div>
<div class="a" style="left:725px;top:687px;width:41px;height:20px;background:#777"></div>
<div class="a" style="left:733px;top:696px;width:24px;height:1px;border-top:1px dotted #bbb"></div>
<div class="t" style="left:700px;top:711.5px;width:84px;text-align:center;font-size:5.5px;font-weight:bold;color:#e8e8e8;letter-spacing:.25px">Engraved Laser Name / Logo</div>
<div class="t" style="left:702px;top:718px;width:84px;text-align:center;font-size:5.6px;font-weight:bold;color:#e8e8e8;letter-spacing:.3px">120mm x 60mm</div>
<div class="lb" style="left:582px;width:207px">Back-Front cover</div>
<!-- thumb 4 selected -->
<div class="a" style="left:799px;top:662px;width:207px;height:84px;background:#fff;border:1px solid #f08a2c"></div>
<div class="a" style="left:799px;top:730px;width:207px;height:16px;background:#f08a2c"></div>
<div class="a" style="left:800px;top:663px;width:205px;height:67px;background:#fff;overflow:hidden">
  <div class="a" style="left:12px;top:8px;width:24px;height:54px;background:#777;filter:blur(5.5px)"></div>
  <div class="a" style="left:48.5px;top:8px;width:43px;height:50px;background:#777;border:1px solid #fff;transform:rotate(-14deg);box-shadow:0 0 1px rgba(0,0,0,.6),1px 1px 1px rgba(0,0,0,.5)"></div>
  <div class="a" style="left:111px;top:2px;width:43px;height:63px;background:#777"></div>
  <div class="a" style="left:155px;top:2px;width:42px;height:63px;background:#777"></div>
  <div class="a" style="left:2px;top:33px;width:200px;height:1px;border-top:1px dotted rgba(255,255,255,.7)"></div>
</div>
<div class="t" style="left:799px;top:733px;width:207px;text-align:center;font-size:11.5px;font-weight:bold;color:#fff">1-2</div>
<!-- thumb 5 -->
<div class="a" style="left:1016px;top:663px;width:207px;height:68px;background:#fff;border:2px solid #b0b0b0"></div>
<div class="lb" style="left:1016px;width:207px">3-4</div>
<!-- thumb 6 -->
<div class="a" style="left:1233px;top:663px;width:125px;height:68px;background:#fff;border:2px solid #b0b0b0;border-right:none"></div>
<div class="lb" style="left:1233px;width:207px">5-6</div>

<!-- h scrollbar -->
<div class="a" style="left:250px;top:746px;width:1109px;height:13px;background:#f4f4f4;border:1px solid #8a8a8a"></div>
<div class="a" style="left:705px;top:747px;width:637px;height:11px;background:#c8c8c8;border-left:1px solid #8a8a8a"></div>
<div class="a" style="left:250px;top:746px;width:17px;height:13px;background:#fff;border:1px solid #8a8a8a"></div>
<svg class="a" style="left:254px;top:748px" width="8" height="9" viewBox="0 0 8 9"><path d="M0 4.5L8 0V9z" fill="#222"/></svg>
<div class="a" style="left:1342px;top:746px;width:17px;height:13px;background:#fff;border:1px solid #8a8a8a"></div>
<svg class="a" style="left:1347px;top:748px" width="8" height="9" viewBox="0 0 8 9"><path d="M8 4.5L0 0V9z" fill="#222"/></svg>
<!-- taskbar sliver -->
<div class="a" style="left:0;top:766px;width:1366px;height:2px;background:#3c3c3c"></div>

<!-- ===== Left sidebar ===== -->
<div class="a" style="left:1px;top:117px;width:229px;height:660px;background:#fff;border:1px solid #d6d6d6;border-radius:13px 13px 0 0"></div>
<div class="a" style="left:1px;top:117px;width:54px;height:660px;background:#ededed;border:1px solid #d6d6d6;border-right:1px solid #d2d2d2;border-radius:13px 0 0 0"></div>
<svg class="a" style="left:49px;top:137px" width="7" height="14" viewBox="0 0 7 14"><path d="M7 0L0 7 7 14z" fill="#fff"/></svg>
<!-- photos icon -->
<svg class="a" style="left:14px;top:134px" width="27" height="24" viewBox="0 0 27 24"><rect x="1" y="1" width="25" height="22" fill="none" stroke="#f89b3c" stroke-width="2"/><circle cx="8" cy="6.5" r="2" fill="#f89b3c"/><path d="M3.5 20.5V15c2-2 4-2.5 6-1.5 2-3 6-3.5 8.5 0 2 1 3 1 5 1.5v5.5z" fill="#f89b3c"/><path d="M13 12.5c1-.9 2.6-.9 3.5 0" stroke="#fff" stroke-width=".8" fill="none"/></svg>
<div class="t" style="left:5px;top:164px;font-size:13px;font-weight:bold;color:#111">Photos</div>
<!-- decor icon -->
<svg class="a" style="left:12px;top:185px" width="29" height="28" viewBox="0 0 28 27"><path d="M7.75 4.90 A6.4 6.4 0 0 1 20.25 4.90 A6.4 6.4 0 0 1 24.11 16.78 A6.4 6.4 0 0 1 14.00 24.13 A6.4 6.4 0 0 1 3.89 16.78 A6.4 6.4 0 0 1 7.75 4.90z" fill="none" stroke="#e04a5a" stroke-width="1.5"/><circle cx="14" cy="13.5" r="3.6" fill="none" stroke="#e04a5a" stroke-width="1.4"/><path d="M14 11.3l2.1 1.5-.8 2.4h-2.6l-.8-2.4z" fill="none" stroke="#e04a5a" stroke-width="1"/><path d="M14 9.9v-1.5M17.4 12.4l1.4-.5M16.2 16.5l.9 1.2M11.8 16.5l-.9 1.2M10.6 12.4l-1.4-.5" stroke="#e04a5a" stroke-width="1"/></svg>
<div class="t" style="left:4px;top:218px;font-size:13.5px;color:#666">Decor...</div>
<!-- border heart -->
<svg class="a" style="left:13px;top:243px" width="28" height="24" viewBox="0 0 28 24"><path d="M14 22C8 17 2 12 2 7.5 2 4 4.8 1.5 8 1.5c2.5 0 4.5 1.5 6 3.5 1.5-2 3.5-3.5 6-3.5 3.2 0 6 2.5 6 6C26 12 20 17 14 22z" fill="none" stroke="#22a33a" stroke-width="2.3"/><path d="M19 5.5c2 .5 3 2 3 3.5" fill="none" stroke="#22a33a" stroke-width="1.6"/></svg>
<div class="t" style="left:6px;top:272px;font-size:13.6px;color:#666">Border</div>
<!-- background bricks -->
<svg class="a" style="left:14px;top:297px" width="26" height="24" viewBox="0 0 26 24"><rect x="1" y="1" width="24" height="22" fill="none" stroke="#8e5a8e" stroke-width="2"/><path d="M1 6.5h24M1 12h24M1 17.5h24M9 1v5.5M17 6.5v5.5M6 12v5.5M14 12v5.5M20 17.5V23M11 17.5V23" stroke="#8e5a8e" stroke-width="1.6"/></svg>
<div class="t" style="left:4px;top:326px;font-size:13px;color:#666">Backg...</div>
<!-- text icon -->
<svg class="a" style="left:14px;top:350px" width="27" height="25" viewBox="0 0 27 25"><rect x="1.2" y="1.2" width="24.6" height="22.6" rx="3" fill="none" stroke="#35b08a" stroke-width="2.4"/><path d="M7 5.5h13v3.2h-1.6l-.6-1.4h-3.3v11h2v1.6H10.5v-1.6h2V7.3H9.2l-.6 1.4H7z" fill="#35b08a"/></svg>
<div class="t" style="left:14px;top:380px;font-size:14px;color:#666">Text</div>
<!-- word icon -->
<svg class="a" style="left:11px;top:404px" width="32" height="26" viewBox="0 0 32 26"><path d="M4 5l-2 1 4 18 18-2" fill="none" stroke="#e59a9a" stroke-width="1.4"/><rect x="7" y="1.5" width="22" height="19" rx="1.5" fill="none" stroke="#e07f85" stroke-width="1.6"/><path d="M16 6h9M18 9h7" stroke="#e07f85" stroke-width="1.2"/><path d="M13.5 17c-2.5-2-4-3.2-4-4.7 0-1 .8-1.7 1.7-1.7.8 0 1.5.4 2.3 1.2.8-.8 1.5-1.2 2.3-1.2.9 0 1.7.7 1.7 1.7 0 1.5-1.5 2.7-4 4.7zM21 18.5c-1.8-1.4-2.8-2.3-2.8-3.3 0-.7.5-1.2 1.2-1.2.6 0 1 .3 1.6.8.6-.5 1-.8 1.6-.8.7 0 1.2.5 1.2 1.2 0 1-1 1.9-2.8 3.3z" fill="#e07f85"/></svg>
<div class="t" style="left:3px;top:434px;font-size:13.5px;color:#666">Word ...</div>
<!-- layout icon -->
<svg class="a" style="left:15px;top:458px" width="24" height="24" viewBox="0 0 24 24"><rect x="0" y="0" width="9" height="24" fill="#3aa0c9"/><rect x="11" y="0" width="13" height="7" fill="#3aa0c9"/><rect x="11" y="9" width="13" height="6" fill="#3aa0c9"/><rect x="11" y="17" width="13" height="7" fill="#3aa0c9"/></svg>
<div class="t" style="left:6px;top:488px;font-size:13.6px;color:#666">Layout</div>

<!-- buttons -->
<div class="btn" style="left:75px;top:140px">Computer</div>
<div class="btn" style="left:148px;top:140px">Mobile</div>
<div class="btn" style="left:75px;top:174px">Uploaded</div>
<div class="btn" style="left:148px;top:174px">Automatic</div>
<div class="a" style="left:84px;top:209px;width:12px;height:12px;border:1px solid #777;background:linear-gradient(#f4f4f4,#e4e4e4)"></div>
<div class="t" style="left:100px;top:211px;font-size:11.8px;color:#555">Hide used pictures</div>
<!-- photo grid -->
<div class="a" style="left:55px;top:235px;width:163px;height:530px;overflow:hidden">
<div class="cell" style="left:3.5px;top:-11.60px;background:#fff"><svg class="x" width="8" height="8" viewBox="0 0 8 8"><path d="M1 1L7 7M7 1L1 7" stroke="#1a1a1a" stroke-width="1.9"/></svg><svg class="ph" width="36" height="54" viewBox="0 0 36 54" preserveAspectRatio="none"><use href="#p_sit"/></svg></div>
<div class="cell" style="left:85.5px;top:-11.60px;background:#fff"><svg class="x" width="8" height="8" viewBox="0 0 8 8"><path d="M1 1L7 7M7 1L1 7" stroke="#1a1a1a" stroke-width="1.9"/></svg><svg class="ph" width="36" height="54" viewBox="0 0 36 54" preserveAspectRatio="none"><use href="#p_shelf"/></svg></div>
<div class="cell" style="left:3.5px;top:56.65px;background:#fff"><svg class="x" width="8" height="8" viewBox="0 0 8 8"><path d="M1 1L7 7M7 1L1 7" stroke="#1a1a1a" stroke-width="1.9"/></svg><svg class="ph" width="36" height="54" viewBox="0 0 36 54" preserveAspectRatio="none"><use href="#p_pray"/></svg></div>
<div class="cell" style="left:85.5px;top:56.65px;background:#fff"><svg class="x" width="8" height="8" viewBox="0 0 8 8"><path d="M1 1L7 7M7 1L1 7" stroke="#1a1a1a" stroke-width="1.9"/></svg><svg class="ph" width="36" height="54" viewBox="0 0 36 54" preserveAspectRatio="none"><use href="#p_arch"/></svg></div>
<div class="cell" style="left:3.5px;top:124.90px;background:#fff"><svg class="x" width="8" height="8" viewBox="0 0 8 8"><path d="M1 1L7 7M7 1L1 7" stroke="#1a1a1a" stroke-width="1.9"/></svg><svg class="ph" width="36" height="54" viewBox="0 0 36 54" preserveAspectRatio="none"><use href="#p_stand"/></svg></div>
<div class="cell" style="left:85.5px;top:124.90px;background:#fff"><svg class="x" width="8" height="8" viewBox="0 0 8 8"><path d="M1 1L7 7M7 1L1 7" stroke="#1a1a1a" stroke-width="1.9"/></svg><svg class="ph" width="36" height="54" viewBox="0 0 36 54" preserveAspectRatio="none"><use href="#p_close"/></svg></div>
<div class="cell" style="left:3.5px;top:193.15px;background:#fff"><svg class="x" width="8" height="8" viewBox="0 0 8 8"><path d="M1 1L7 7M7 1L1 7" stroke="#1a1a1a" stroke-width="1.9"/></svg><svg class="ph" width="36" height="54" viewBox="0 0 36 54" preserveAspectRatio="none"><use href="#p_face"/></svg></div>
<div class="cell" style="left:85.5px;top:193.15px;background:#c9d6e7"><svg class="x" width="8" height="8" viewBox="0 0 8 8"><path d="M1 1L7 7M7 1L1 7" stroke="#1a1a1a" stroke-width="1.9"/></svg><svg class="ph" width="36" height="54" viewBox="0 0 120 180" preserveAspectRatio="none"><use href="#p_big"/></svg></div>
<div class="cell" style="left:3.5px;top:261.40px;background:#fff"><svg class="x" width="8" height="8" viewBox="0 0 8 8"><path d="M1 1L7 7M7 1L1 7" stroke="#1a1a1a" stroke-width="1.9"/></svg><svg class="ph" width="36" height="54" viewBox="0 0 36 54" preserveAspectRatio="none"><use href="#p_coupleB"/></svg></div>
<div class="cell" style="left:85.5px;top:261.40px;background:#fff"><svg class="x" width="8" height="8" viewBox="0 0 8 8"><path d="M1 1L7 7M7 1L1 7" stroke="#1a1a1a" stroke-width="1.9"/></svg><svg class="ph" width="36" height="54" viewBox="0 0 36 54" preserveAspectRatio="none"><use href="#p_manarch"/></svg></div>
<div class="cell" style="left:3.5px;top:329.65px;background:#fff"><svg class="x" width="8" height="8" viewBox="0 0 8 8"><path d="M1 1L7 7M7 1L1 7" stroke="#1a1a1a" stroke-width="1.9"/></svg><svg class="ph" width="36" height="54" viewBox="0 0 36 54" preserveAspectRatio="none"><use href="#p_mansit"/></svg></div>
<div class="cell" style="left:85.5px;top:329.65px;background:#fff"><svg class="x" width="8" height="8" viewBox="0 0 8 8"><path d="M1 1L7 7M7 1L1 7" stroke="#1a1a1a" stroke-width="1.9"/></svg><svg class="ph" width="36" height="54" viewBox="0 0 36 54" preserveAspectRatio="none"><use href="#p_portrait"/></svg></div>
<div class="cell" style="left:3.5px;top:397.90px;background:#fff"><svg class="x" width="8" height="8" viewBox="0 0 8 8"><path d="M1 1L7 7M7 1L1 7" stroke="#1a1a1a" stroke-width="1.9"/></svg><svg class="ph" width="36" height="54" viewBox="0 0 36 54" preserveAspectRatio="none"><use href="#p_mansit2"/></svg></div>
<div class="cell" style="left:85.5px;top:397.90px;background:#fff"><svg class="x" width="8" height="8" viewBox="0 0 8 8"><path d="M1 1L7 7M7 1L1 7" stroke="#1a1a1a" stroke-width="1.9"/></svg><svg class="ph" width="36" height="54" viewBox="0 0 36 54" preserveAspectRatio="none"><use href="#p_womansit"/></svg></div>
<div class="cell" style="left:3.5px;top:466.15px;background:#fff"><svg class="x" width="8" height="8" viewBox="0 0 8 8"><path d="M1 1L7 7M7 1L1 7" stroke="#1a1a1a" stroke-width="1.9"/></svg><svg class="ph" width="36" height="54" viewBox="0 0 36 54" preserveAspectRatio="none"><use href="#p_womanclose"/></svg></div>
<div class="cell" style="left:85.5px;top:466.15px;background:#fff"><svg class="x" width="8" height="8" viewBox="0 0 8 8"><path d="M1 1L7 7M7 1L1 7" stroke="#1a1a1a" stroke-width="1.9"/></svg><svg class="ph" width="36" height="54" viewBox="0 0 36 54" preserveAspectRatio="none"><use href="#p_womansofa"/></svg></div>
</div>
<!-- scrollbar -->
<div class="a" style="left:218px;top:234px;width:12px;height:531px;background:#f0f0f0;border-left:1px solid #d8d8d8"></div>
<div class="a" style="left:218px;top:234px;width:13px;height:16px;background:#fff;border:1px solid #8a8a8a"></div>
<svg class="a" style="left:220px;top:238px" width="9" height="8" viewBox="0 0 9 8"><path d="M4.5 0L9 8H0z" fill="#222"/></svg>
<div class="a" style="left:219px;top:250px;width:11px;height:338px;background:#c8c8c8"></div>
<div class="a" style="left:218px;top:749px;width:13px;height:16px;background:#fff;border:1px solid #8a8a8a"></div>
<svg class="a" style="left:220px;top:754px" width="9" height="8" viewBox="0 0 9 8"><path d="M0 0H9L4.5 8z" fill="#222"/></svg>
<!-- red selection -->
<div class="a" style="left:132px;top:426px;width:97px;height:69px;border:3px solid #e62818;border-radius:4px"></div>

<!-- ===== Drag preview + arrow ===== -->
<div class="a" style="left:222px;top:429px;width:129px;height:189px;background:#fff;border:2px solid #5ec3ee;box-shadow:3px 3px 3px rgba(0,0,0,.35)"></div>
<svg class="a" style="left:227px;top:433px" width="120" height="180"><use href="#p_big"/></svg>
<div class="t" style="left:249px;top:597px;font-size:11px;font-weight:bold;color:#fff;text-shadow:0 0 2px rgba(0,0,0,.25)">FCM_2439.jpg</div>
<svg class="a" style="left:330px;top:450px" width="270" height="80" viewBox="330 450 270 80"><path d="M340 514.8L568.2 461.7 566 457.8 583.3 463.3 569.7 475.3 570 471.4 340 516.8z" fill="#fd1e12"/></svg>
</body></html>
